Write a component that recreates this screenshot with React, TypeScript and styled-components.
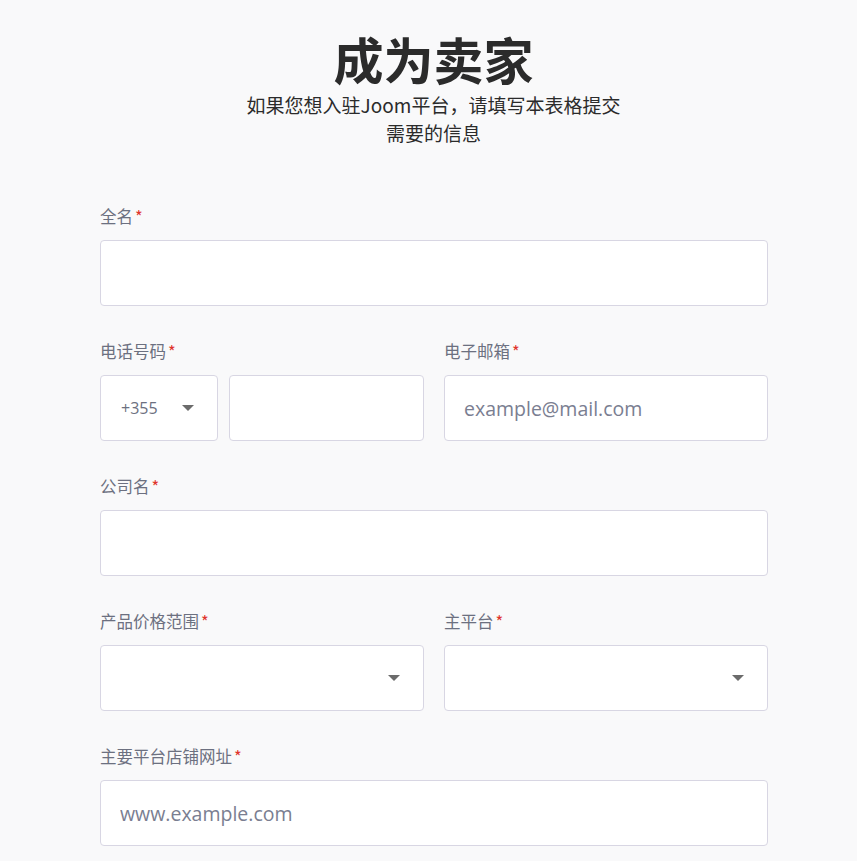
import styled, { createGlobalStyle } from 'styled-components';

const GlobalStyle = createGlobalStyle`
  html, body {
    margin: 0;
    padding: 0;
    background: #f9f9fa;
  }
  body {
    font-family: "Noto Sans CJK SC", "Open Sans", sans-serif;
  }
  * { box-sizing: border-box; }
`;

function Arrow() {
  return (
    <svg width="12" height="6" viewBox="0 0 12 6">
      <path d="M0 0h12L6 6z" fill="#6b6b6b" />
    </svg>
  );
}

function Label({ children }: { children: string }) {
  return (
    <LabelText>
      {children}
      <Star>*</Star>
    </LabelText>
  );
}

export default function App() {
  return (
    <>
      <GlobalStyle />
      <Page>
        <Header>
          <Title>成为卖家</Title>
          <Subtitle>如果您想入驻Joom平台，请填写本表格提交需要的信息</Subtitle>
        </Header>

        <Form>
          <Field>
            <Label>全名</Label>
            <Input />
          </Field>

          <Row>
            <Field>
              <Label>电话号码</Label>
              <PhoneGroup>
                <CodeSelect>
                  <CodeText>+355</CodeText>
                  <Arrow />
                </CodeSelect>
                <Input />
              </PhoneGroup>
            </Field>
            <Field>
              <Label>电子邮箱</Label>
              <Input placeholder="example@mail.com" />
            </Field>
          </Row>

          <Field>
            <Label>公司名</Label>
            <Input />
          </Field>

          <Row>
            <Field>
              <Label>产品价格范围</Label>
              <Select>
                <Arrow />
              </Select>
            </Field>
            <Field>
              <Label>主平台</Label>
              <Select>
                <Arrow />
              </Select>
            </Field>
          </Row>

          <Field>
            <Label>主要平台店铺网址</Label>
            <Input placeholder="www.example.com" />
          </Field>
        </Form>
      </Page>
    </>
  );
}

const Page = styled.div`
  width: 857px;
  min-height: 861px;
  padding-top: 28px;
  display: flex;
  flex-direction: column;
  align-items: center;
`;

const Header = styled.div`
  display: flex;
  flex-direction: column;
  align-items: center;
  margin-left: 10px;
`;

const Title = styled.h1`
  margin: 0;
  font-size: 50px;
  line-height: 60px;
  font-weight: 700;
  color: #2b2b2b;
`;

const Subtitle = styled.p`
  margin: 3px 0 0;
  width: 382px;
  text-align: center;
  font-size: 19px;
  line-height: 28px;
  color: #2b2b2b;
`;

const Form = styled.div`
  width: 668px;
  margin-top: 57px;
  margin-left: 11px;
  display: flex;
  flex-direction: column;
  gap: 33px;
`;

const Row = styled.div`
  display: grid;
  grid-template-columns: 1fr 1fr;
  column-gap: 20px;
`;

const Field = styled.div`
  display: flex;
  flex-direction: column;
  gap: 12px;
`;

const LabelText = styled.div`
  font-size: 16.5px;
  line-height: 24px;
  color: #6c7080;
`;

const Star = styled.span`
  color: #e0342c;
  margin-left: 2px;
`;

const Input = styled.input`
  width: 100%;
  min-width: 0;
  height: 66px;
  border: 1px solid #d8d6e3;
  border-radius: 4px;
  background: #fff;
  padding: 0 19px;
  font-family: "Open Sans", "Noto Sans CJK SC", sans-serif;
  font-size: 19.5px;
  color: #2b2b2b;
  outline: none;
  &::placeholder {
    color: #7a7e91;
  }
`;

const PhoneGroup = styled.div`
  display: flex;
  gap: 11px;
`;

const CodeSelect = styled.div`
  flex: 0 0 118px;
  height: 66px;
  border: 1px solid #d8d6e3;
  border-radius: 4px;
  background: #fff;
  display: flex;
  align-items: center;
  justify-content: space-between;
  padding: 0 23px 0 20px;
`;

const CodeText = styled.span`
  font-family: "Open Sans", sans-serif;
  font-size: 16px;
  color: #6c7080;
`;

const Select = styled.div`
  height: 66px;
  border: 1px solid #d8d6e3;
  border-radius: 4px;
  background: #fff;
  display: flex;
  align-items: center;
  justify-content: flex-end;
  padding-right: 23px;
`;
